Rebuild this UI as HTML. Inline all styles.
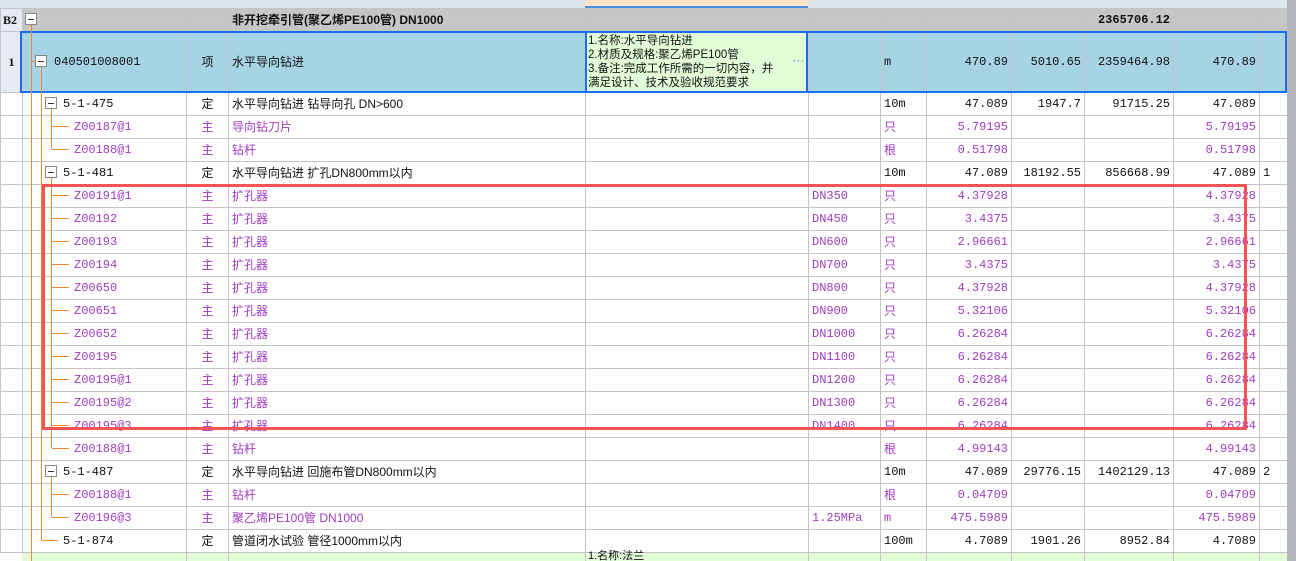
<!DOCTYPE html>
<html style="width:1296px;height:561px;overflow:hidden"><head><meta charset="utf-8"><style>
*{margin:0;padding:0;box-sizing:border-box}
body{width:1296px;height:561px;overflow:hidden;background:#fff;position:relative;font-family:"Liberation Mono","Noto Sans CJK SC",monospace;font-size:12px;color:#111}
table{position:absolute;left:0;top:8px;border-collapse:collapse;table-layout:fixed}
td{border:1px solid #c4c4c4;height:23px;white-space:nowrap;overflow:hidden;padding:0 3px;line-height:14px}
td.r{text-align:right}
td.c{text-align:center}
.p td{color:#a03cc0}
.cn{font-family:"Liberation Sans","Noto Sans CJK SC",sans-serif;font-size:12px}
.hdr{position:absolute;left:0;top:0;width:1287px;height:8px;background:#dfe5ee}
.sb{position:absolute;left:1287px;top:0;width:9px;height:561px;background:#b4b8bc}
.ln{position:absolute;background:#f08a30}
.bx{position:absolute;width:12px;height:12px;border:1px solid #888;background:#fff}
.bx:after{content:"";position:absolute;left:2px;top:5px;width:6px;height:1px;background:#333}
.red{position:absolute;left:42px;top:184px;width:1205px;height:246px;border:3px solid #f55456}
</style></head><body>
<div class="hdr"></div>
<div style="position:absolute;left:585px;top:0;width:223px;height:8px;background:#fde4c8;border-bottom:2px solid #4a90e0"></div>
<table>
<colgroup><col style="width:22px"><col style="width:164px"><col style="width:42px"><col style="width:357px"><col style="width:223px"><col style="width:72px"><col style="width:46px"><col style="width:85px"><col style="width:73px"><col style="width:89px"><col style="width:86px"><col style="width:28px"></colgroup>
<tr style="background:#c6c6c6;font-weight:bold"><td style="background:#e6eaf2;padding:0 2px;font-family:'Liberation Serif'">B2</td><td></td><td></td><td class="cn" style="font-weight:bold">非开挖牵引管(聚乙烯PE100管) DN1000</td><td></td><td></td><td></td><td></td><td></td><td class="r">2365706.12</td><td></td><td></td></tr>
<tr style="background:#a6d4e4;height:61px"><td class="c" style="background:#e6eaf2;height:61px;font-family:'Liberation Serif';font-weight:bold">1</td><td style="padding-left:31px">040501008001</td><td class="c cn">项</td><td class="cn">水平导向钻进</td><td class="cn" style="background:#e2fcd8;line-height:14px;padding-left:2px;font-size:11.5px">1.名称:水平导向钻进<br>2.材质及规格:聚乙烯PE100管<br>3.备注:完成工作所需的一切内容，并<br>满足设计、技术及验收规范要求<span style="position:absolute;left:792px;top:45px;color:#4a7ad0">···</span></td><td></td><td>m</td><td class="r">470.89</td><td class="r">5010.65</td><td class="r">2359464.98</td><td class="r">470.89</td><td></td></tr>
<tr><td></td><td style="padding-left:40px">5-1-475</td><td class="c cn">定</td><td class="cn">水平导向钻进 钻导向孔 DN&gt;600</td><td></td><td></td><td>10m</td><td class="r">47.089</td><td class="r">1947.7</td><td class="r">91715.25</td><td class="r">47.089</td><td></td></tr>
<tr class="p"><td></td><td style="padding-left:51px">Z00187@1</td><td class="c cn">主</td><td class="cn">导向钻刀片</td><td></td><td></td><td class="cn">只</td><td class="r">5.79195</td><td></td><td></td><td class="r">5.79195</td><td></td></tr>
<tr class="p"><td></td><td style="padding-left:51px">Z00188@1</td><td class="c cn">主</td><td class="cn">钻杆</td><td></td><td></td><td class="cn">根</td><td class="r">0.51798</td><td></td><td></td><td class="r">0.51798</td><td></td></tr>
<tr><td></td><td style="padding-left:40px">5-1-481</td><td class="c cn">定</td><td class="cn">水平导向钻进 扩孔DN800mm以内</td><td></td><td></td><td>10m</td><td class="r">47.089</td><td class="r">18192.55</td><td class="r">856668.99</td><td class="r">47.089</td><td>1</td></tr>
<tr class="p"><td></td><td style="padding-left:51px">Z00191@1</td><td class="c cn">主</td><td class="cn">扩孔器</td><td></td><td>DN350</td><td class="cn">只</td><td class="r">4.37928</td><td></td><td></td><td class="r">4.37928</td><td></td></tr>
<tr class="p"><td></td><td style="padding-left:51px">Z00192</td><td class="c cn">主</td><td class="cn">扩孔器</td><td></td><td>DN450</td><td class="cn">只</td><td class="r">3.4375</td><td></td><td></td><td class="r">3.4375</td><td></td></tr>
<tr class="p"><td></td><td style="padding-left:51px">Z00193</td><td class="c cn">主</td><td class="cn">扩孔器</td><td></td><td>DN600</td><td class="cn">只</td><td class="r">2.96661</td><td></td><td></td><td class="r">2.96661</td><td></td></tr>
<tr class="p"><td></td><td style="padding-left:51px">Z00194</td><td class="c cn">主</td><td class="cn">扩孔器</td><td></td><td>DN700</td><td class="cn">只</td><td class="r">3.4375</td><td></td><td></td><td class="r">3.4375</td><td></td></tr>
<tr class="p"><td></td><td style="padding-left:51px">Z00650</td><td class="c cn">主</td><td class="cn">扩孔器</td><td></td><td>DN800</td><td class="cn">只</td><td class="r">4.37928</td><td></td><td></td><td class="r">4.37928</td><td></td></tr>
<tr class="p"><td></td><td style="padding-left:51px">Z00651</td><td class="c cn">主</td><td class="cn">扩孔器</td><td></td><td>DN900</td><td class="cn">只</td><td class="r">5.32106</td><td></td><td></td><td class="r">5.32106</td><td></td></tr>
<tr class="p"><td></td><td style="padding-left:51px">Z00652</td><td class="c cn">主</td><td class="cn">扩孔器</td><td></td><td>DN1000</td><td class="cn">只</td><td class="r">6.26284</td><td></td><td></td><td class="r">6.26284</td><td></td></tr>
<tr class="p"><td></td><td style="padding-left:51px">Z00195</td><td class="c cn">主</td><td class="cn">扩孔器</td><td></td><td>DN1100</td><td class="cn">只</td><td class="r">6.26284</td><td></td><td></td><td class="r">6.26284</td><td></td></tr>
<tr class="p"><td></td><td style="padding-left:51px">Z00195@1</td><td class="c cn">主</td><td class="cn">扩孔器</td><td></td><td>DN1200</td><td class="cn">只</td><td class="r">6.26284</td><td></td><td></td><td class="r">6.26284</td><td></td></tr>
<tr class="p"><td></td><td style="padding-left:51px">Z00195@2</td><td class="c cn">主</td><td class="cn">扩孔器</td><td></td><td>DN1300</td><td class="cn">只</td><td class="r">6.26284</td><td></td><td></td><td class="r">6.26284</td><td></td></tr>
<tr class="p"><td></td><td style="padding-left:51px">Z00195@3</td><td class="c cn">主</td><td class="cn">扩孔器</td><td></td><td>DN1400</td><td class="cn">只</td><td class="r">6.26284</td><td></td><td></td><td class="r">6.26284</td><td></td></tr>
<tr class="p"><td></td><td style="padding-left:51px">Z00188@1</td><td class="c cn">主</td><td class="cn">钻杆</td><td></td><td></td><td class="cn">根</td><td class="r">4.99143</td><td></td><td></td><td class="r">4.99143</td><td></td></tr>
<tr><td></td><td style="padding-left:40px">5-1-487</td><td class="c cn">定</td><td class="cn">水平导向钻进 回施布管DN800mm以内</td><td></td><td></td><td>10m</td><td class="r">47.089</td><td class="r">29776.15</td><td class="r">1402129.13</td><td class="r">47.089</td><td>2</td></tr>
<tr class="p"><td></td><td style="padding-left:51px">Z00188@1</td><td class="c cn">主</td><td class="cn">钻杆</td><td></td><td></td><td class="cn">根</td><td class="r">0.04709</td><td></td><td></td><td class="r">0.04709</td><td></td></tr>
<tr class="p"><td></td><td style="padding-left:51px">Z00196@3</td><td class="c cn">主</td><td class="cn">聚乙烯PE100管 DN1000</td><td></td><td>1.25MPa</td><td>m</td><td class="r">475.5989</td><td></td><td></td><td class="r">475.5989</td><td></td></tr>
<tr><td></td><td style="padding-left:40px">5-1-874</td><td class="c cn">定</td><td class="cn">管道闭水试验 管径1000mm以内</td><td></td><td></td><td>100m</td><td class="r">4.7089</td><td class="r">1901.26</td><td class="r">8952.84</td><td class="r">4.7089</td><td></td></tr>
</table>
<div style="position:absolute;left:22px;top:552px;width:1265px;height:9px;background:#e2fcd8;overflow:hidden;border-top:1px solid #c4c4c4"></div>
<div style="position:absolute;left:186px;top:552px;width:1px;height:9px;background:#c4c4c4"></div>
<div style="position:absolute;left:228px;top:552px;width:1px;height:9px;background:#c4c4c4"></div>
<div style="position:absolute;left:585px;top:552px;width:1px;height:9px;background:#c4c4c4"></div>
<div class="cn" style="position:absolute;left:588px;top:550px;font-size:11px;line-height:12px;height:11px;overflow:hidden">1.名称:法兰</div>
<div style="position:absolute;left:808px;top:552px;width:1px;height:9px;background:#c4c4c4"></div>
<div style="position:absolute;left:880px;top:552px;width:1px;height:9px;background:#c4c4c4"></div>
<div style="position:absolute;left:926px;top:552px;width:1px;height:9px;background:#c4c4c4"></div>
<div style="position:absolute;left:1011px;top:552px;width:1px;height:9px;background:#c4c4c4"></div>
<div style="position:absolute;left:1084px;top:552px;width:1px;height:9px;background:#c4c4c4"></div>
<div style="position:absolute;left:1173px;top:552px;width:1px;height:9px;background:#c4c4c4"></div>
<div style="position:absolute;left:1259px;top:552px;width:1px;height:9px;background:#c4c4c4"></div>
<div style="position:absolute;left:20px;top:31px;width:1267px;height:62px;border:2px solid #1a6ef0;pointer-events:none"></div>
<div style="position:absolute;left:585px;top:31px;width:223px;height:62px;border:2px solid #1a6ef0"></div>
<div class="ln" style="left:31px;top:25px;width:1px;height:536px"></div>
<div class="ln" style="left:31px;top:61px;width:4px;height:1px"></div>
<div class="ln" style="left:41px;top:67px;width:1px;height:473px"></div>
<div class="ln" style="left:41px;top:540px;width:17px;height:1px"></div>
<div class="ln" style="left:51px;top:109px;width:1px;height:40px"></div>
<div class="ln" style="left:51px;top:178px;width:1px;height:270px"></div>
<div class="ln" style="left:51px;top:477px;width:1px;height:40px"></div>
<div class="ln" style="left:52px;top:126px;width:17px;height:1px"></div>
<div class="ln" style="left:52px;top:149px;width:17px;height:1px"></div>
<div class="ln" style="left:52px;top:195px;width:17px;height:1px"></div>
<div class="ln" style="left:52px;top:218px;width:17px;height:1px"></div>
<div class="ln" style="left:52px;top:241px;width:17px;height:1px"></div>
<div class="ln" style="left:52px;top:264px;width:17px;height:1px"></div>
<div class="ln" style="left:52px;top:287px;width:17px;height:1px"></div>
<div class="ln" style="left:52px;top:310px;width:17px;height:1px"></div>
<div class="ln" style="left:52px;top:333px;width:17px;height:1px"></div>
<div class="ln" style="left:52px;top:356px;width:17px;height:1px"></div>
<div class="ln" style="left:52px;top:379px;width:17px;height:1px"></div>
<div class="ln" style="left:52px;top:402px;width:17px;height:1px"></div>
<div class="ln" style="left:52px;top:425px;width:17px;height:1px"></div>
<div class="ln" style="left:52px;top:448px;width:17px;height:1px"></div>
<div class="ln" style="left:52px;top:494px;width:17px;height:1px"></div>
<div class="ln" style="left:52px;top:517px;width:17px;height:1px"></div>
<div class="bx" style="left:25px;top:13px"></div>
<div class="bx" style="left:35px;top:55px"></div>
<div class="bx" style="left:45px;top:97px"></div>
<div class="bx" style="left:45px;top:166px"></div>
<div class="bx" style="left:45px;top:465px"></div>
<div class="red"></div>
<div class="sb"></div>
</body></html>
